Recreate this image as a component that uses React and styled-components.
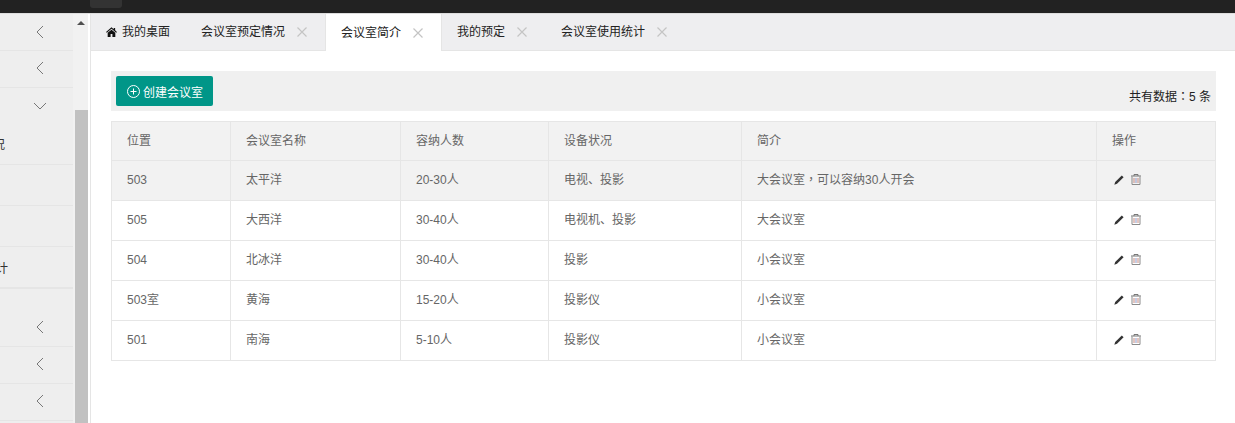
import React from "react";
import styled, { createGlobalStyle } from "styled-components";

const Global = createGlobalStyle`
  html, body { margin: 0; padding: 0; background: #fff; }
  body { font: 12px/1.5 "Liberation Sans", "Noto Sans CJK SC", sans-serif; color: #333; overflow: hidden; }
  * { box-sizing: border-box; }
`;

const Page = styled.div`width: 1235px; height: 423px; display: flex; flex-direction: column; overflow: hidden;`;
const TopBar = styled.header`height: 14px; flex: none; background: #222; border-bottom: 1px solid #ddd; padding-left: 90px;`;
const TopTab = styled.div`width: 32px; height: 8px; background: #333; border-radius: 0 0 3px 3px;`;
const Body = styled.div`flex: 1; display: flex; min-height: 0;`;

const Side = styled.aside`width: 91px; flex: none; display: flex; border-right: 1px solid #e5e5e5; padding-right: 2px;`;
const Menu = styled.nav`width: 73px; flex: none; background: #eee; overflow: hidden;`;
const MenuRow = styled.div`
  height: ${p => p.$h}px; display: flex; align-items: ${p => p.$end ? "flex-end" : "center"}; justify-content: flex-end;
  border-bottom: ${p => p.$thick ? 2 : p.$plain ? 0 : 1}px solid #e5e5e5;
  padding: ${p => p.$top || 0}px ${p => p.$right}px ${p => p.$bottom || 0}px 0;
  white-space: nowrap; color: #333; font-size: 12px;
  & > span { flex: none; }
`;
const Track = styled.div`width: 15px; flex: none; background: #f1f1f1; padding-left: 2px;`;
const Arrow = styled.div`width: 0; height: 0; margin: 7px 0 0 2px; border: 4px solid transparent; border-top: 0; border-bottom: 4px solid #505050;`;
const Thumb = styled.div`width: 13px; height: 313px; margin-top: 85px; background: #c1c1c1;`;

const Main = styled.main`flex: 1; min-width: 0; display: flex; flex-direction: column;`;
const Tabs = styled.div`height: 37px; flex: none; display: flex; gap: 1px; background: #eeeef0; border-bottom: 1px solid #e5e5e5;`;
const Tab = styled.div`
  height: ${p => p.$active ? 37 : 36}px; display: flex; align-items: center; padding: 0 ${p => p.$home ? 15 : 17}px 0 15px;
  color: #222; white-space: nowrap; background: ${p => p.$active ? "#fff" : "transparent"};
  ${p => p.$active ? "box-shadow: -1px 0 0 #e5e5e5, 1px 0 0 #e5e5e5;" : ""}
`;
const HomeIcon = styled.svg`width: 11px; height: 10px; margin-right: 5px; fill: #111;`;
const CloseIcon = styled.svg`width: 12px; height: 12px; margin-left: 11px; stroke: #c4c4c4; stroke-width: 1.2; fill: none;`;

const Content = styled.section`flex: 1; padding: 20px 19px 0 20px;`;
const Toolbar = styled.div`height: 40px; background: #f0f0f0; padding: 5px; display: flex; justify-content: space-between;`;
const CreateButton = styled.button`
  width: 97px; height: 30px; border: 0; border-radius: 2px; background: #009688; color: #fff; padding: 0 0 0 11px;
  display: flex; align-items: center; gap: 3px; font: 12px "Liberation Sans", "Noto Sans CJK SC", sans-serif;
`;
const PlusIcon = styled.svg`width: 13px; height: 13px; stroke: #fff; fill: none; stroke-width: 1;`;
const Count = styled.span`align-self: flex-end; line-height: 14px; margin-bottom: 2px; color: #222;`;
const Punct = styled.span`font-family: "Noto Sans CJK TC", sans-serif;`;

const Table = styled.table`
  width: 1104px; margin-top: 10px; border-collapse: collapse; table-layout: fixed; color: #666;
`;
const Th = styled.th`
  height: 39px; font-weight: 400; text-align: left; padding: 0 15px; background: #f2f2f2; border: 1px solid #e6e6e6;
`;
const Td = styled.td`
  height: 40px; padding: 0 15px 2px; border: 1px solid #e6e6e6; background: ${p => p.$hl ? "#f2f2f2" : "#fff"};
`;
const Actions = styled.div`display: flex; align-items: center; gap: 7px; padding-left: 2px;`;
const PencilIcon = styled.svg`width: 10px; height: 10px; fill: #333;`;
const TrashIcon = styled.svg`width: 10px; height: 11px; fill: none; stroke-width: 1;`;

const Chevron = ({ down }) => (
  <svg width={down ? 14 : 8} height={down ? 8 : 14} viewBox={down ? "0 0 14 8" : "0 0 8 14"} fill="none" stroke="#777" strokeWidth="1">
    <path d={down ? "M1 1l6 6 6-6" : "M7 1L1 7l6 6"} />
  </svg>
);
const Close = () => <CloseIcon viewBox="0 0 12 12"><path d="M1.500 1.500l9 9M10.500 1.500l-9 9" /></CloseIcon>;

const colWidths = [119, 170, 148, 193, 355, 119];
const heads = ["位置", "会议室名称", "容纳人数", "设备状况", "简介", "操作"];
const rows = [
  ["503", "太平洋", "20-30人", "电视、投影", <>大会议室<Punct>，</Punct>可以容纳30人开会</>],
  ["505", "大西洋", "30-40人", "电视机、投影", "大会议室"],
  ["504", "北冰洋", "30-40人", "投影", "小会议室"],
  ["503室", "黄海", "15-20人", "投影仪", "小会议室"],
  ["501", "南海", "5-10人", "投影仪", "小会议室"],
];
const tabs = ["会议室预定情况", "会议室简介", "我的预定", "会议室使用统计"];

export default function App() {
  return (
    <Page>
      <Global />
      <TopBar><TopTab /></TopBar>
      <Body>
        <Side>
          <Menu>
            <MenuRow $h={37} $right={29}><Chevron /></MenuRow>
            <MenuRow $h={37} $right={29} $bottom={2}><Chevron /></MenuRow>
            <MenuRow $h={36} $plain $right={26}><Chevron down /></MenuRow>
            <MenuRow $h={41} $right={68} $top={1}><span>会议室预定情况</span></MenuRow>
            <MenuRow $h={41} $right={68} />
            <MenuRow $h={41} $right={68} />
            <MenuRow $h={42} $thick $right={65} $top={3}><span>会议室使用统计</span></MenuRow>
            <MenuRow $h={58} $end $right={29} $bottom={12}><Chevron /></MenuRow>
            <MenuRow $h={37} $right={29} $bottom={2}><Chevron /></MenuRow>
            <MenuRow $h={37} $right={29} $bottom={2}><Chevron /></MenuRow>
          </Menu>
          <Track>
            <Arrow />
            <Thumb />
          </Track>
        </Side>
        <Main>
          <Tabs>
            <Tab $home>
              <HomeIcon viewBox="0 0 12 11"><path d="M6 .2L0 5.400l.8.900L6 1.800l5.200 4.500.8-.9-2-1.700V1H8.400v1.600zM1.800 6.400V11h3.200V7.800h2V11h3.200V6.400L6 2.900z" /></HomeIcon>
              我的桌面
            </Tab>
            {tabs.map((t, i) => (
              <Tab key={t} $active={i === 1}>{t}<Close /></Tab>
            ))}
          </Tabs>
          <Content>
            <Toolbar>
              <CreateButton>
                <PlusIcon viewBox="0 0 13 13"><circle cx="6.500" cy="6.500" r="6" /><path d="M3.500 6.500h6M6.500 3.500v6" /></PlusIcon>
                创建会议室
              </CreateButton>
              <Count>共有数据<Punct>：</Punct>5 条</Count>
            </Toolbar>
            <Table>
              <colgroup>{colWidths.map((w, i) => <col key={i} width={w} />)}</colgroup>
              <thead>
                <tr>{heads.map(h => <Th key={h}>{h}</Th>)}</tr>
              </thead>
              <tbody>
                {rows.map((r, i) => (
                  <tr key={i}>
                    {r.map((c, j) => <Td key={j} $hl={i === 0}>{c}</Td>)}
                    <Td $hl={i === 0}>
                      <Actions>
                        <PencilIcon viewBox="0 0 10 10"><path d="M7.800.400l1.800 1.800L3 8.800.300 9.700l.900-2.700z" /></PencilIcon>
                        <TrashIcon viewBox="0 0 10 11">
                          <path d="M0 2h10M3 2V.500h4V2" stroke="#777" />
                          <path d="M1 2.500v8h8v-8" stroke="#8a8a8a" />
                          <path d="M3 4v5" stroke="#c98a80" />
                          <path d="M5 4v5" stroke="#8a9ac8" />
                          <path d="M7 4v5" stroke="#c98a80" />
                        </TrashIcon>
                      </Actions>
                    </Td>
                  </tr>
                ))}
              </tbody>
            </Table>
          </Content>
        </Main>
      </Body>
    </Page>
  );
}
